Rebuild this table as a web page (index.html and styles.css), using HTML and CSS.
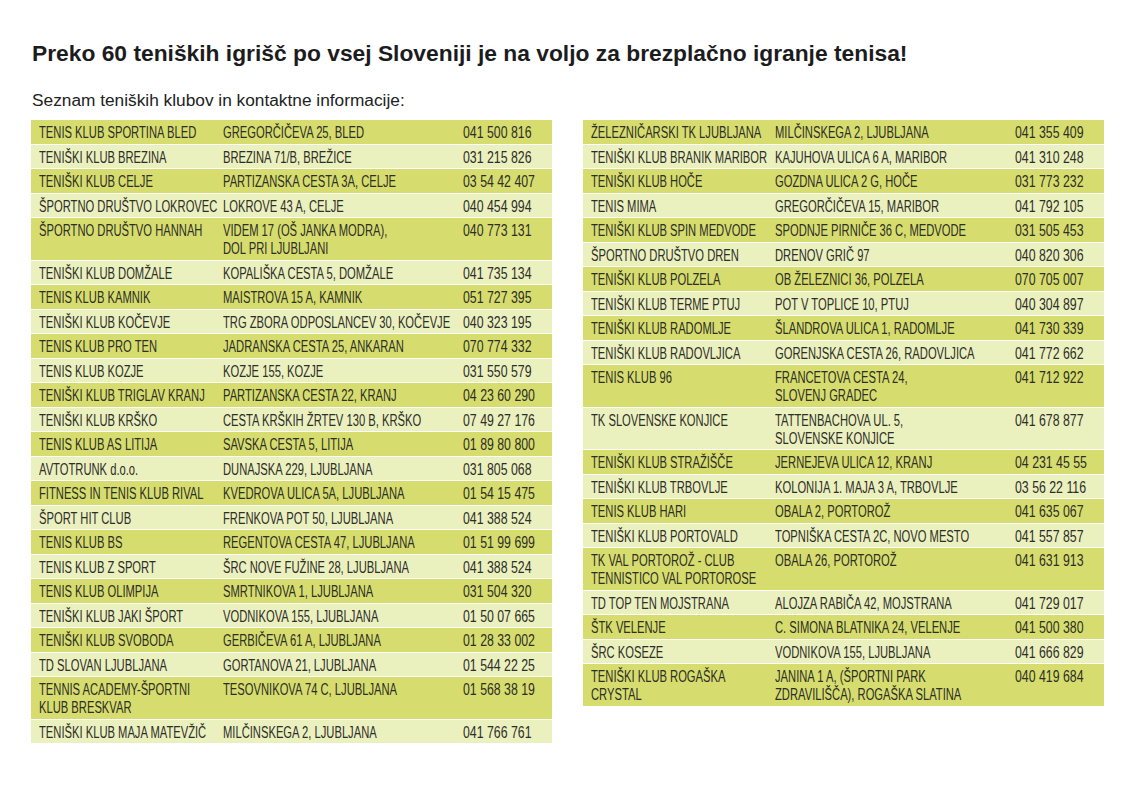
FILE: index.html
```html
<!DOCTYPE html>
<html lang="sl">
<head>
<meta charset="utf-8">
<title>Teniški klubi</title>
<link rel="stylesheet" href="styles.css">
</head>
<body>
<div class="page">
  <h1 class="title">Preko 60 teniških igrišč po vsej Sloveniji je na voljo za brezplačno igranje tenisa!</h1>
  <p class="subtitle">Seznam teniških klubov in kontaktne informacije:</p>
  <div class="columns">
    <table class="clubs">
      <tbody>
        <tr><td class="name"><span class="t">TENIS KLUB SPORTINA BLED</span></td><td class="addr"><span class="t">GREGORČIČEVA 25, BLED</span></td><td class="tel"><span class="t">041 500 816</span></td></tr>
        <tr><td class="name"><span class="t">TENIŠKI KLUB BREZINA</span></td><td class="addr"><span class="t">BREZINA 71/B, BREŽICE</span></td><td class="tel"><span class="t">031 215 826</span></td></tr>
        <tr><td class="name"><span class="t">TENIŠKI KLUB CELJE</span></td><td class="addr"><span class="t">PARTIZANSKA CESTA 3A, CELJE</span></td><td class="tel"><span class="t">03 54 42 407</span></td></tr>
        <tr><td class="name"><span class="t">ŠPORTNO DRUŠTVO LOKROVEC</span></td><td class="addr"><span class="t">LOKROVE 43 A, CELJE</span></td><td class="tel"><span class="t">040 454 994</span></td></tr>
        <tr><td class="name"><span class="t">ŠPORTNO DRUŠTVO HANNAH</span></td><td class="addr"><span class="t">VIDEM 17 (OŠ JANKA MODRA),<br>DOL PRI LJUBLJANI</span></td><td class="tel"><span class="t">040 773 131</span></td></tr>
        <tr><td class="name"><span class="t">TENIŠKI KLUB DOMŽALE</span></td><td class="addr"><span class="t">KOPALIŠKA CESTA 5, DOMŽALE</span></td><td class="tel"><span class="t">041 735 134</span></td></tr>
        <tr><td class="name"><span class="t">TENIS KLUB KAMNIK</span></td><td class="addr"><span class="t">MAISTROVA 15 A, KAMNIK</span></td><td class="tel"><span class="t">051 727 395</span></td></tr>
        <tr><td class="name"><span class="t">TENIŠKI KLUB KOČEVJE</span></td><td class="addr"><span class="t">TRG ZBORA ODPOSLANCEV 30, KOČEVJE</span></td><td class="tel"><span class="t">040 323 195</span></td></tr>
        <tr><td class="name"><span class="t">TENIS KLUB PRO TEN</span></td><td class="addr"><span class="t">JADRANSKA CESTA 25, ANKARAN</span></td><td class="tel"><span class="t">070 774 332</span></td></tr>
        <tr><td class="name"><span class="t">TENIS KLUB KOZJE</span></td><td class="addr"><span class="t">KOZJE 155, KOZJE</span></td><td class="tel"><span class="t">031 550 579</span></td></tr>
        <tr><td class="name"><span class="t">TENIŠKI KLUB TRIGLAV KRANJ</span></td><td class="addr"><span class="t">PARTIZANSKA CESTA 22, KRANJ</span></td><td class="tel"><span class="t">04 23 60 290</span></td></tr>
        <tr><td class="name"><span class="t">TENIŠKI KLUB KRŠKO</span></td><td class="addr"><span class="t">CESTA KRŠKIH ŽRTEV 130 B, KRŠKO</span></td><td class="tel"><span class="t">07 49 27 176</span></td></tr>
        <tr><td class="name"><span class="t">TENIS KLUB AS LITIJA</span></td><td class="addr"><span class="t">SAVSKA CESTA 5, LITIJA</span></td><td class="tel"><span class="t">01 89 80 800</span></td></tr>
        <tr><td class="name"><span class="t">AVTOTRUNK d.o.o.</span></td><td class="addr"><span class="t">DUNAJSKA 229, LJUBLJANA</span></td><td class="tel"><span class="t">031 805 068</span></td></tr>
        <tr><td class="name"><span class="t">FITNESS IN TENIS KLUB RIVAL</span></td><td class="addr"><span class="t">KVEDROVA ULICA 5A, LJUBLJANA</span></td><td class="tel"><span class="t">01 54 15 475</span></td></tr>
        <tr><td class="name"><span class="t">ŠPORT HIT CLUB</span></td><td class="addr"><span class="t">FRENKOVA POT 50, LJUBLJANA</span></td><td class="tel"><span class="t">041 388 524</span></td></tr>
        <tr><td class="name"><span class="t">TENIS KLUB BS</span></td><td class="addr"><span class="t">REGENTOVA CESTA 47, LJUBLJANA</span></td><td class="tel"><span class="t">01 51 99 699</span></td></tr>
        <tr><td class="name"><span class="t">TENIS KLUB Z SPORT</span></td><td class="addr"><span class="t">ŠRC NOVE FUŽINE 28, LJUBLJANA</span></td><td class="tel"><span class="t">041 388 524</span></td></tr>
        <tr><td class="name"><span class="t">TENIS KLUB OLIMPIJA</span></td><td class="addr"><span class="t">SMRTNIKOVA 1, LJUBLJANA</span></td><td class="tel"><span class="t">031 504 320</span></td></tr>
        <tr><td class="name"><span class="t">TENIŠKI KLUB JAKI ŠPORT</span></td><td class="addr"><span class="t">VODNIKOVA 155, LJUBLJANA</span></td><td class="tel"><span class="t">01 50 07 665</span></td></tr>
        <tr><td class="name"><span class="t">TENIŠKI KLUB SVOBODA</span></td><td class="addr"><span class="t">GERBIČEVA 61 A, LJUBLJANA</span></td><td class="tel"><span class="t">01 28 33 002</span></td></tr>
        <tr><td class="name"><span class="t">TD SLOVAN LJUBLJANA</span></td><td class="addr"><span class="t">GORTANOVA 21, LJUBLJANA</span></td><td class="tel"><span class="t">01 544 22 25</span></td></tr>
        <tr><td class="name"><span class="t">TENNIS ACADEMY-ŠPORTNI<br>KLUB BRESKVAR</span></td><td class="addr"><span class="t">TESOVNIKOVA 74 C, LJUBLJANA</span></td><td class="tel"><span class="t">01 568 38 19</span></td></tr>
        <tr><td class="name"><span class="t">TENIŠKI KLUB MAJA MATEVŽIČ</span></td><td class="addr"><span class="t">MILČINSKEGA 2, LJUBLJANA</span></td><td class="tel"><span class="t">041 766 761</span></td></tr>
      </tbody>
    </table>
    <table class="clubs">
      <tbody>
        <tr><td class="name"><span class="t">ŽELEZNIČARSKI TK LJUBLJANA</span></td><td class="addr"><span class="t">MILČINSKEGA 2, LJUBLJANA</span></td><td class="tel"><span class="t">041 355 409</span></td></tr>
        <tr><td class="name"><span class="t">TENIŠKI KLUB BRANIK MARIBOR</span></td><td class="addr"><span class="t">KAJUHOVA ULICA 6 A, MARIBOR</span></td><td class="tel"><span class="t">041 310 248</span></td></tr>
        <tr><td class="name"><span class="t">TENIŠKI KLUB HOČE</span></td><td class="addr"><span class="t">GOZDNA ULICA 2 G, HOČE</span></td><td class="tel"><span class="t">031 773 232</span></td></tr>
        <tr><td class="name"><span class="t">TENIS MIMA</span></td><td class="addr"><span class="t">GREGORČIČEVA 15, MARIBOR</span></td><td class="tel"><span class="t">041 792 105</span></td></tr>
        <tr><td class="name"><span class="t">TENIŠKI KLUB SPIN MEDVODE</span></td><td class="addr"><span class="t">SPODNJE PIRNIČE 36 C, MEDVODE</span></td><td class="tel"><span class="t">031 505 453</span></td></tr>
        <tr><td class="name"><span class="t">ŠPORTNO DRUŠTVO DREN</span></td><td class="addr"><span class="t">DRENOV GRIČ 97</span></td><td class="tel"><span class="t">040 820 306</span></td></tr>
        <tr><td class="name"><span class="t">TENIŠKI KLUB POLZELA</span></td><td class="addr"><span class="t">OB ŽELEZNICI 36, POLZELA</span></td><td class="tel"><span class="t">070 705 007</span></td></tr>
        <tr><td class="name"><span class="t">TENIŠKI KLUB TERME PTUJ</span></td><td class="addr"><span class="t">POT V TOPLICE 10, PTUJ</span></td><td class="tel"><span class="t">040 304 897</span></td></tr>
        <tr><td class="name"><span class="t">TENIŠKI KLUB RADOMLJE</span></td><td class="addr"><span class="t">ŠLANDROVA ULICA 1, RADOMLJE</span></td><td class="tel"><span class="t">041 730 339</span></td></tr>
        <tr><td class="name"><span class="t">TENIŠKI KLUB RADOVLJICA</span></td><td class="addr"><span class="t">GORENJSKA CESTA 26, RADOVLJICA</span></td><td class="tel"><span class="t">041 772 662</span></td></tr>
        <tr><td class="name"><span class="t">TENIS KLUB 96</span></td><td class="addr"><span class="t">FRANCETOVA CESTA 24,<br>SLOVENJ GRADEC</span></td><td class="tel"><span class="t">041 712 922</span></td></tr>
        <tr><td class="name"><span class="t">TK SLOVENSKE KONJICE</span></td><td class="addr"><span class="t">TATTENBACHOVA UL. 5,<br>SLOVENSKE KONJICE</span></td><td class="tel"><span class="t">041 678 877</span></td></tr>
        <tr><td class="name"><span class="t">TENIŠKI KLUB STRAŽIŠČE</span></td><td class="addr"><span class="t">JERNEJEVA ULICA 12, KRANJ</span></td><td class="tel"><span class="t">04 231 45 55</span></td></tr>
        <tr><td class="name"><span class="t">TENIŠKI KLUB TRBOVLJE</span></td><td class="addr"><span class="t">KOLONIJA 1. MAJA 3 A, TRBOVLJE</span></td><td class="tel"><span class="t">03 56 22 116</span></td></tr>
        <tr><td class="name"><span class="t">TENIS KLUB HARI</span></td><td class="addr"><span class="t">OBALA 2, PORTOROŽ</span></td><td class="tel"><span class="t">041 635 067</span></td></tr>
        <tr><td class="name"><span class="t">TENIŠKI KLUB PORTOVALD</span></td><td class="addr"><span class="t">TOPNIŠKA CESTA 2C, NOVO MESTO</span></td><td class="tel"><span class="t">041 557 857</span></td></tr>
        <tr><td class="name"><span class="t">TK VAL PORTOROŽ - CLUB<br>TENNISTICO VAL PORTOROSE</span></td><td class="addr"><span class="t">OBALA 26, PORTOROŽ</span></td><td class="tel"><span class="t">041 631 913</span></td></tr>
        <tr><td class="name"><span class="t">TD TOP TEN MOJSTRANA</span></td><td class="addr"><span class="t">ALOJZA RABIČA 42, MOJSTRANA</span></td><td class="tel"><span class="t">041 729 017</span></td></tr>
        <tr><td class="name"><span class="t">ŠTK VELENJE</span></td><td class="addr"><span class="t">C. SIMONA BLATNIKA 24, VELENJE</span></td><td class="tel"><span class="t">041 500 380</span></td></tr>
        <tr><td class="name"><span class="t">ŠRC KOSEZE</span></td><td class="addr"><span class="t">VODNIKOVA 155, LJUBLJANA</span></td><td class="tel"><span class="t">041 666 829</span></td></tr>
        <tr><td class="name"><span class="t">TENIŠKI KLUB ROGAŠKA<br>CRYSTAL</span></td><td class="addr"><span class="t">JANINA 1 A, (ŠPORTNI PARK<br>ZDRAVILIŠČA), ROGAŠKA SLATINA</span></td><td class="tel"><span class="t">040 419 684</span></td></tr>
      </tbody>
    </table>
  </div>
</div>
</body>
</html>
```

FILE: styles.css
```css
html, body {
  margin: 0;
  padding: 0;
  background: #ffffff;
}

.page {
  padding: 40px 0 0 31px;
  font-family: "Liberation Sans", Arial, sans-serif;
  color: #1e1e1e;
}

.title {
  margin: 0 0 0 1px;
  font-size: 22.8px;
  line-height: 26px;
  font-weight: bold;
  color: #1c1c20;
}

.subtitle {
  margin: 24px 0 0 1px;
  font-size: 17.3px;
  line-height: 20px;
  color: #222222;
}

.columns {
  display: flex;
  align-items: flex-start;
  gap: 31px;
  margin-top: 10px;
}

.clubs {
  border-collapse: separate;
  border-spacing: 0 1px;
  margin: -1px 0;
  table-layout: fixed;
  width: 521px;
  font-family: "Liberation Sans", Arial, sans-serif;
  font-size: 16px;
  color: #2e2e28;
}

.clubs td {
  padding: 4px 4px 1.5px 8px;
  line-height: 18px;
  vertical-align: top;
  white-space: nowrap;
  overflow: visible;
}

.clubs td.name { width: 172px; }
.clubs td.addr { width: 228px; }
.clubs td.tel  { width: 85px; }

.t {
  display: inline-block;
  transform: scaleX(0.70);
  transform-origin: 0 0;
}

.tel .t {
  transform: scaleX(0.77);
}

.clubs tr:nth-child(odd) td { background: #d6dd6e; }
.clubs tr:nth-child(even) td { background: #ebf0bf; }
```
